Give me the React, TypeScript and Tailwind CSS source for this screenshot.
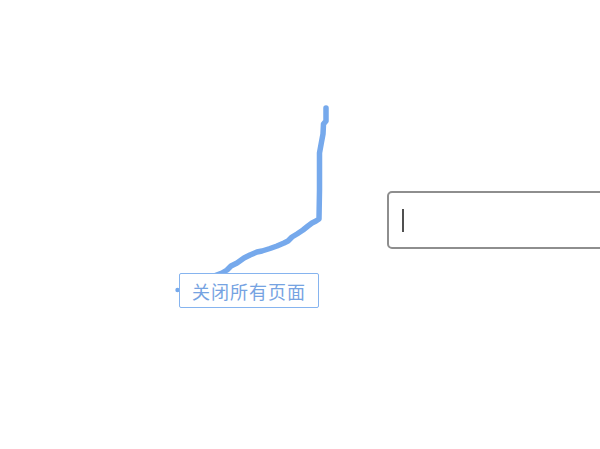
import React from "react";

const pts = [
  [326, 108],
  [326, 121],
  [323.5, 124],
  [323, 134],
  [321.5, 142],
  [319.5, 153],
  [319.5, 190],
  [319, 219],
  [316, 221],
  [312, 223],
  [308, 226],
  [303, 230],
  [297, 234],
  [292, 237],
  [288, 241],
  [284, 243],
  [277, 246],
  [270, 248.5],
  [262, 251],
  [257, 252],
  [250, 255],
  [244, 258],
  [237, 263],
  [231, 266],
  [227, 270],
  [222, 273],
  [214, 276],
];

export default function App() {
  const d = pts.map((p, i) => `${i === 0 ? "M" : "L"}${p[0]} ${p[1]}`).join(" ");
  return (
    <div className="relative w-[600px] h-[449px] bg-white overflow-hidden" style={{ fontFamily: '"Noto Sans CJK SC", "Noto Sans", sans-serif' }}>
      <svg className="absolute left-0 top-0" width="600" height="449" viewBox="0 0 600 449">
        <path d={d} fill="none" stroke="#76a9ec" strokeWidth="5.5" strokeLinecap="round" strokeLinejoin="round" />
        <circle cx="177.5" cy="290" r="2.2" fill="#76a9ec" />
      </svg>
      <div className="absolute left-[179px] top-[273px] w-[140px] h-[35px] border border-[#86b4ef] rounded-[2px] bg-white flex items-center justify-center text-[18px] leading-none tracking-[1px] text-[#76a3e2]">
        关闭所有页面
      </div>
      <div className="absolute left-[387px] top-[191px] w-[240px] h-[58px] border-2 border-[#8e8e8e] rounded-[5px] bg-white flex items-center pl-[13px]">
        <div className="w-[2px] h-[23px] bg-[#505050]" />
      </div>
    </div>
  );
}
